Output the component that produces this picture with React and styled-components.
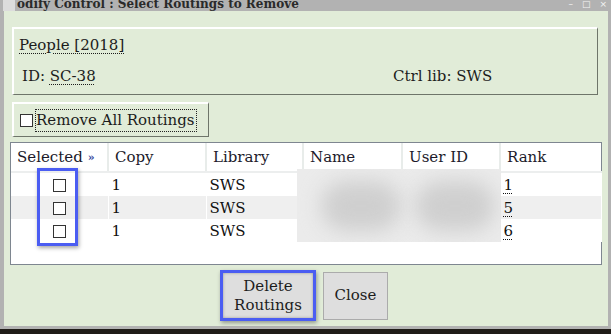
import React from "react";
import styled, { createGlobalStyle } from "styled-components";

const GlobalStyle = createGlobalStyle`
  html, body {
    margin: 0;
    padding: 0;
    background: #201c18;
  }
`;

const Window = styled.div`
  width: 611px;
  height: 329px;
  box-sizing: border-box;
  background: #b2b2b2;
  padding: 0 3px 3px 4px;
  display: flex;
  flex-direction: column;
  font-family: "DejaVu Serif", "Liberation Serif", serif;
  color: #1c1c1c;
`;

const TitleBar = styled.div`
  height: 11px;
  display: flex;
  align-items: flex-end;
  overflow: hidden;
  margin-left: -4px;
  margin-right: -3px;
`;

const TitleIcon = styled.div`
  width: 12px;
  height: 11px;
  margin-left: 3px;
  background: #dcdcdc;
  flex-shrink: 0;
`;

const TitleText = styled.div`
  font-size: 12px;
  font-weight: bold;
  color: #2a2a2a;
  line-height: 12px;
  margin-left: 2px;
  margin-bottom: 1px;
  white-space: nowrap;
  flex: 1;
`;

const WinControls = styled.div`
  display: flex;
  gap: 9px;
  align-items: flex-start;
  align-self: flex-start;
  margin-right: 4px;
  font-family: "DejaVu Sans", sans-serif;
  font-size: 9px;
  line-height: 9px;
  color: #f4f4f4;
`;

const Body = styled.div`
  flex: 1;
  background: #e1ecd8;
  padding: 16px 10px 0 8px;
  display: flex;
  flex-direction: column;
`;

const InfoPanel = styled.div`
  height: 68px;
  box-sizing: border-box;
  border-top: 2px solid #ffffff;
  border-left: 2px solid #ffffff;
  border-bottom: 1px solid #6e756a;
  border-right: 1px solid #6e756a;
  padding: 7px 6px 0 5px;
  display: flex;
  flex-direction: column;
  gap: 13px;
  font-size: 15px;
`;

const InfoRow = styled.div`
  display: flex;
  padding-left: ${(p) => p.$indent || 0}px;
`;

const InfoCell = styled.div`
  width: ${(p) => p.$width || "auto"};
`;

const Dotted = styled.span`
  text-decoration: underline dotted;
  text-underline-offset: 3px;
  text-decoration-thickness: 1px;
`;

const RemoveAllButton = styled.label`
  align-self: flex-start;
  margin-top: 7px;
  width: 197px;
  height: 35px;
  box-sizing: border-box;
  border-top: 2px solid #ffffff;
  border-left: 2px solid #ffffff;
  border-bottom: 1px solid #6e756a;
  border-right: 1px solid #6e756a;
  display: flex;
  align-items: center;
  padding-left: 6px;
  font-size: 15px;
`;

const Box = styled.span`
  display: inline-block;
  width: 11px;
  height: 11px;
  border: 1px solid #333;
  background: #fff;
  flex-shrink: 0;
`;

const FocusText = styled.span`
  margin-left: 3px;
  outline: 1px dotted #222;
  padding: 1px 1px 2px 0;
`;

const TableWrap = styled.div`
  position: relative;
  margin: 5px -4px 0 -2px;
  height: 123px;
  box-sizing: border-box;
  border: 1px solid #7e8690;
  background: #ffffff;
`;

const Table = styled.table`
  border-collapse: collapse;
  width: 590px;
  table-layout: fixed;
  font-size: 15px;
`;

const HeadCell = styled.th`
  height: 28px;
  padding: 0 0 0 6px;
  text-align: left;
  font-weight: normal;
  color: #1c1a2a;
  border-right: 2px solid #e8ecea;
  border-bottom: 2px solid #eceeee;
  &:last-child {
    border-right: none;
  }
`;

const Raquo = styled.span`
  font-size: 11px;
  font-weight: bold;
  color: #3a4aa0;
  margin-left: 5px;
  vertical-align: 1px;
`;

const Row = styled.tr`
  background: ${(p) => (p.$alt ? "#efefef" : "#ffffff")};
`;

const Cell = styled.td`
  height: 23px;
  padding: 0 0 0 ${(p) => (p.$pad !== undefined ? p.$pad : 3)}px;
  text-align: ${(p) => p.$align || "left"};
  color: #111;
  border-right: 1px solid #ffffff;
`;

const RowBox = styled(Box)`
  vertical-align: middle;
  margin-left: 1px;
`;

const Redaction = styled.div`
  position: absolute;
  left: 286px;
  top: 26px;
  width: 204px;
  height: 73px;
  background: #ebebeb;
  overflow: hidden;
  &::before,
  &::after {
    content: "";
    position: absolute;
    top: 12px;
    width: 80px;
    height: 50px;
    border-radius: 40px;
    background: #cfcfcf;
    filter: blur(10px);
  }
  &::before {
    left: 24px;
  }
  &::after {
    left: 118px;
  }
`;

const Highlight = styled.div`
  position: absolute;
  left: 26px;
  top: 25px;
  width: 41px;
  height: 78px;
  box-sizing: border-box;
  border: 3px solid #4b5df2;
  box-shadow: 1px 2px 4px rgba(0, 0, 0, 0.35);
  pointer-events: none;
`;

const ButtonRow = styled.div`
  display: flex;
  justify-content: center;
  align-items: center;
  gap: 7px;
  margin-top: 5px;
  padding-right: 2px;
`;

const ActionButton = styled.button`
  font-family: "DejaVu Serif", "Liberation Serif", serif;
  font-size: 15px;
  line-height: 19px;
  color: #1c1c1c;
  background: #dedede;
  box-sizing: border-box;
  width: ${(p) => p.$width}px;
  height: ${(p) => p.$height}px;
  padding: 0;
  border: ${(p) => (p.$focused ? "3px solid #4b5df2" : "1px solid #ababab")};
  box-shadow: ${(p) =>
    p.$focused ? "1px 2px 4px rgba(0,0,0,0.35), inset 0 0 3px rgba(0,0,0,0.3)" : "none"};
`;

const rows = [
  { copy: "1", lib: "SWS", rank: "1" },
  { copy: "1", lib: "SWS", rank: "5" },
  { copy: "1", lib: "SWS", rank: "6" },
];

const columns = ["Selected", "Copy", "Library", "Name", "User ID", "Rank"];

export default function App() {
  return (
    <>
      <GlobalStyle />
      <Window>
        <TitleBar>
          <TitleIcon />
          <TitleText>odify Control : Select Routings to Remove</TitleText>
          <WinControls>
            <span>–</span>
            <span>□</span>
            <span>×</span>
          </WinControls>
        </TitleBar>
        <Body>
          <InfoPanel>
            <InfoRow>
              <Dotted>People [2018]</Dotted>
            </InfoRow>
            <InfoRow $indent={3}>
              <InfoCell $width="371px">
                ID: <Dotted>SC-38</Dotted>
              </InfoCell>
              <InfoCell>Ctrl lib: SWS</InfoCell>
            </InfoRow>
          </InfoPanel>

          <RemoveAllButton>
            <Box />
            <FocusText>Remove All Routings</FocusText>
          </RemoveAllButton>

          <TableWrap>
            <Table>
              <colgroup>
                <col style={{ width: 97 }} />
                <col style={{ width: 98 }} />
                <col style={{ width: 97 }} />
                <col style={{ width: 99 }} />
                <col style={{ width: 98 }} />
                <col style={{ width: 101 }} />
              </colgroup>
              <thead>
                <tr>
                  {columns.map((c) => (
                    <HeadCell key={c}>
                      {c}
                      {c === "Selected" && <Raquo>»</Raquo>}
                    </HeadCell>
                  ))}
                </tr>
              </thead>
              <tbody>
                {rows.map((r, i) => (
                  <Row key={i} $alt={i === 1}>
                    <Cell $align="center" $pad={0}>
                      <RowBox />
                    </Cell>
                    <Cell>{r.copy}</Cell>
                    <Cell>{r.lib}</Cell>
                    <Cell />
                    <Cell />
                    <Cell>
                      <Dotted>{r.rank}</Dotted>
                    </Cell>
                  </Row>
                ))}
              </tbody>
            </Table>
            <Redaction />
            <Highlight />
          </TableWrap>

          <ButtonRow>
            <ActionButton $focused $width={96} $height={51}>
              Delete
              <br />
              Routings
            </ActionButton>
            <ActionButton $width={65} $height={48}>
              Close
            </ActionButton>
          </ButtonRow>
        </Body>
      </Window>
    </>
  );
}
